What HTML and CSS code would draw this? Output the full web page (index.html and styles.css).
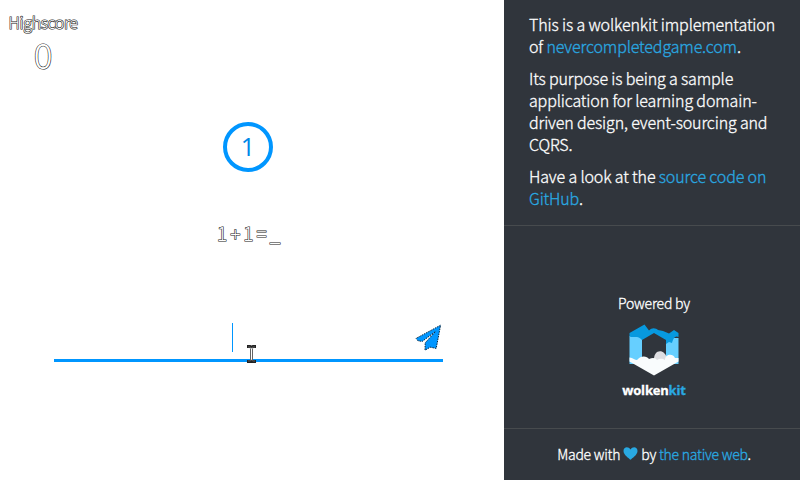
FILE: index.html
```html
<!DOCTYPE html>
<html lang="en">
<head>
<meta charset="utf-8">
<title>wolkenkit game</title>
<link rel="stylesheet" href="styles.css">
</head>
<body>
<main class="game">
  <div class="score"><div class="score-label">Highscore</div><div class="score-value">0</div></div>
  <div class="level">1</div>
  <div class="riddle"><span>1</span><span>+</span><span>1</span><span>=</span><span>_</span></div>
  <div class="answer">
    <span class="caret"></span>
    <svg class="send" width="28" height="28" viewBox="0 0 28 28"><path d="M25.6 1.2 L1 14.4 L3 16.8 L7.2 17.4 L20.4 7.6 L10.2 18.8 L10 26.2 L15.2 23.2 L21.2 24.4 Z" fill="#0096ff" stroke="#06263f" stroke-width="1" stroke-dasharray="1.5 1"/></svg>
    <svg class="pointer" width="11" height="18" viewBox="0 0 11 18"><path d="M1 1.5H4L5.5 2.5 7 1.5H10M1 16.5H4L5.5 15.5 7 16.5H10M5.5 2.5V15.5" fill="none" stroke="#222" stroke-width="3"/><path d="M5.5 3V15" stroke="#fff" stroke-width="1.6"/><path d="M2 2H4L5.5 3 7 2H9M2 16H4L5.5 15 7 16H9" fill="none" stroke="#777" stroke-width=".7"/></svg>
  </div>
</main>
<aside class="sidebar">
  <section class="about">
    <p>This is a wolkenkit implementation<br>of <a>nevercompletedgame.com</a>.</p>
    <p>Its purpose is being a sample<br>application for learning domain-<br>driven design, event-sourcing and<br>CQRS.</p>
    <p>Have a look at the <a>source code on<br>GitHub</a>.</p>
  </section>
  <section class="powered">
    <div class="powered-label">Powered by</div>
    <svg class="logo" width="50" height="52" viewBox="0 0 50 52">
      <path d="M.5 12H13V40H.5ZM37 14H49.5V40H37Z" fill="#66cfff"/>
      <path d="M.5 9 15.5 .5 20 6.5C23 3 27 4 29 6L34 7 40 9.5 45 6 49.5 9V13C46 11 44 15 43 19L40 18 37 20V16L25 9 13 16C9 11 5 14 .5 12.5Z" fill="#0799df"/>
      <path d="M25 37C24 25 36 24 38 35L33 39Z" fill="#dedee2"/>
      <path d="M.5 33.5C4 34 6 36 8 36C12 31 18 32 20 35C24 33 27 34 28 36C31 34 34 35 36 36C36 30 44 29 46 34H49.5V37.5L25 51.5 .5 37.5Z" fill="#f9fcfd"/>
    </svg>
    <div class="wordmark">wolken<span>kit</span></div>
  </section>
  <footer class="credits"><span>Made with</span><svg class="heart" width="15" height="13" viewBox="0 0 15 13"><path d="M7.5 12.8C6 11.3 .5 8 .5 4C.5-.1 5.3-1 7.5 2.5C9.7-1 14.5-.1 14.5 4C14.5 8 9 11.3 7.5 12.8Z" fill="#29a9e2"/></svg><span>by <a>the native web</a>.</span></footer>
</aside>
</body>
</html>
```
FILE: styles.css
```css
* { box-sizing: border-box; }
body { margin: 0; width: 800px; height: 480px; display: flex; overflow: hidden; background: #fff; font-family: "Noto Sans CJK SC", "Open Sans", sans-serif; font-weight: 300; }
.game { width: 504px; display: flex; flex-direction: column; padding-top: 10px; }
.score { width: 70px; margin-left: 8px; height: 112px; text-align: center; color: #fff; -webkit-text-stroke: 1.2px #222; paint-order: stroke fill; }
.score-label { font-size: 16px; line-height: 24px; letter-spacing: -.35px; }
.score-value { font-size: 35px; line-height: 40px; }
.level { width: 50px; height: 50px; margin-left: 223px; border: 4px solid #0096ff; border-radius: 50%; color: #0088e8; font-family: "Open Sans", sans-serif; font-size: 25px; line-height: 41px; text-align: center; font-weight: 500; }
.riddle { display: flex; gap: 3px; height: 36px; margin: 43px 0 0 217px; color: #fff; font-size: 19px; line-height: 36px; -webkit-text-stroke: 1.2px #222; paint-order: stroke fill; }
.answer { position: relative; width: 389px; height: 57px; margin: 54px 0 0 54px; border-bottom: 3px solid #0096ff; }
.caret { position: absolute; left: 178px; top: 18px; width: 1px; height: 29px; background: #0096ff; }
.send { position: absolute; left: 361px; top: 19px; }
.pointer { position: absolute; left: 192px; top: 40px; }
.sidebar { width: 296px; background: #30353c; color: #fff; display: flex; flex-direction: column; -webkit-text-stroke: .3px; }
a { color: #29a9e2; }
.about { height: 226px; padding: 13px 0 0 25px; border-bottom: 1px solid #474b4e; font-size: 16px; line-height: 22px; letter-spacing: -.14px; white-space: nowrap; }
.about p { margin: 0 0 10px; }
.powered { height: 203px; padding: 66px 0 0 4px; border-bottom: 1px solid #474b4e; display: flex; flex-direction: column; align-items: center; }
.powered-label { font-size: 14px; line-height: 22px; letter-spacing: -.2px; }
.logo { margin-top: 10px; }
.wordmark { font-size: 13px; line-height: 20px; margin-top: 4px; font-weight: 700; font-family: "Open Sans", sans-serif; letter-spacing: -.2px; }
.wordmark span { color: #29a9e2; }
.credits { height: 49px; display: flex; align-items: center; justify-content: center; gap: 3px; font-size: 14px; line-height: 22px; letter-spacing: -.25px; padding-left: 4px; }
```
